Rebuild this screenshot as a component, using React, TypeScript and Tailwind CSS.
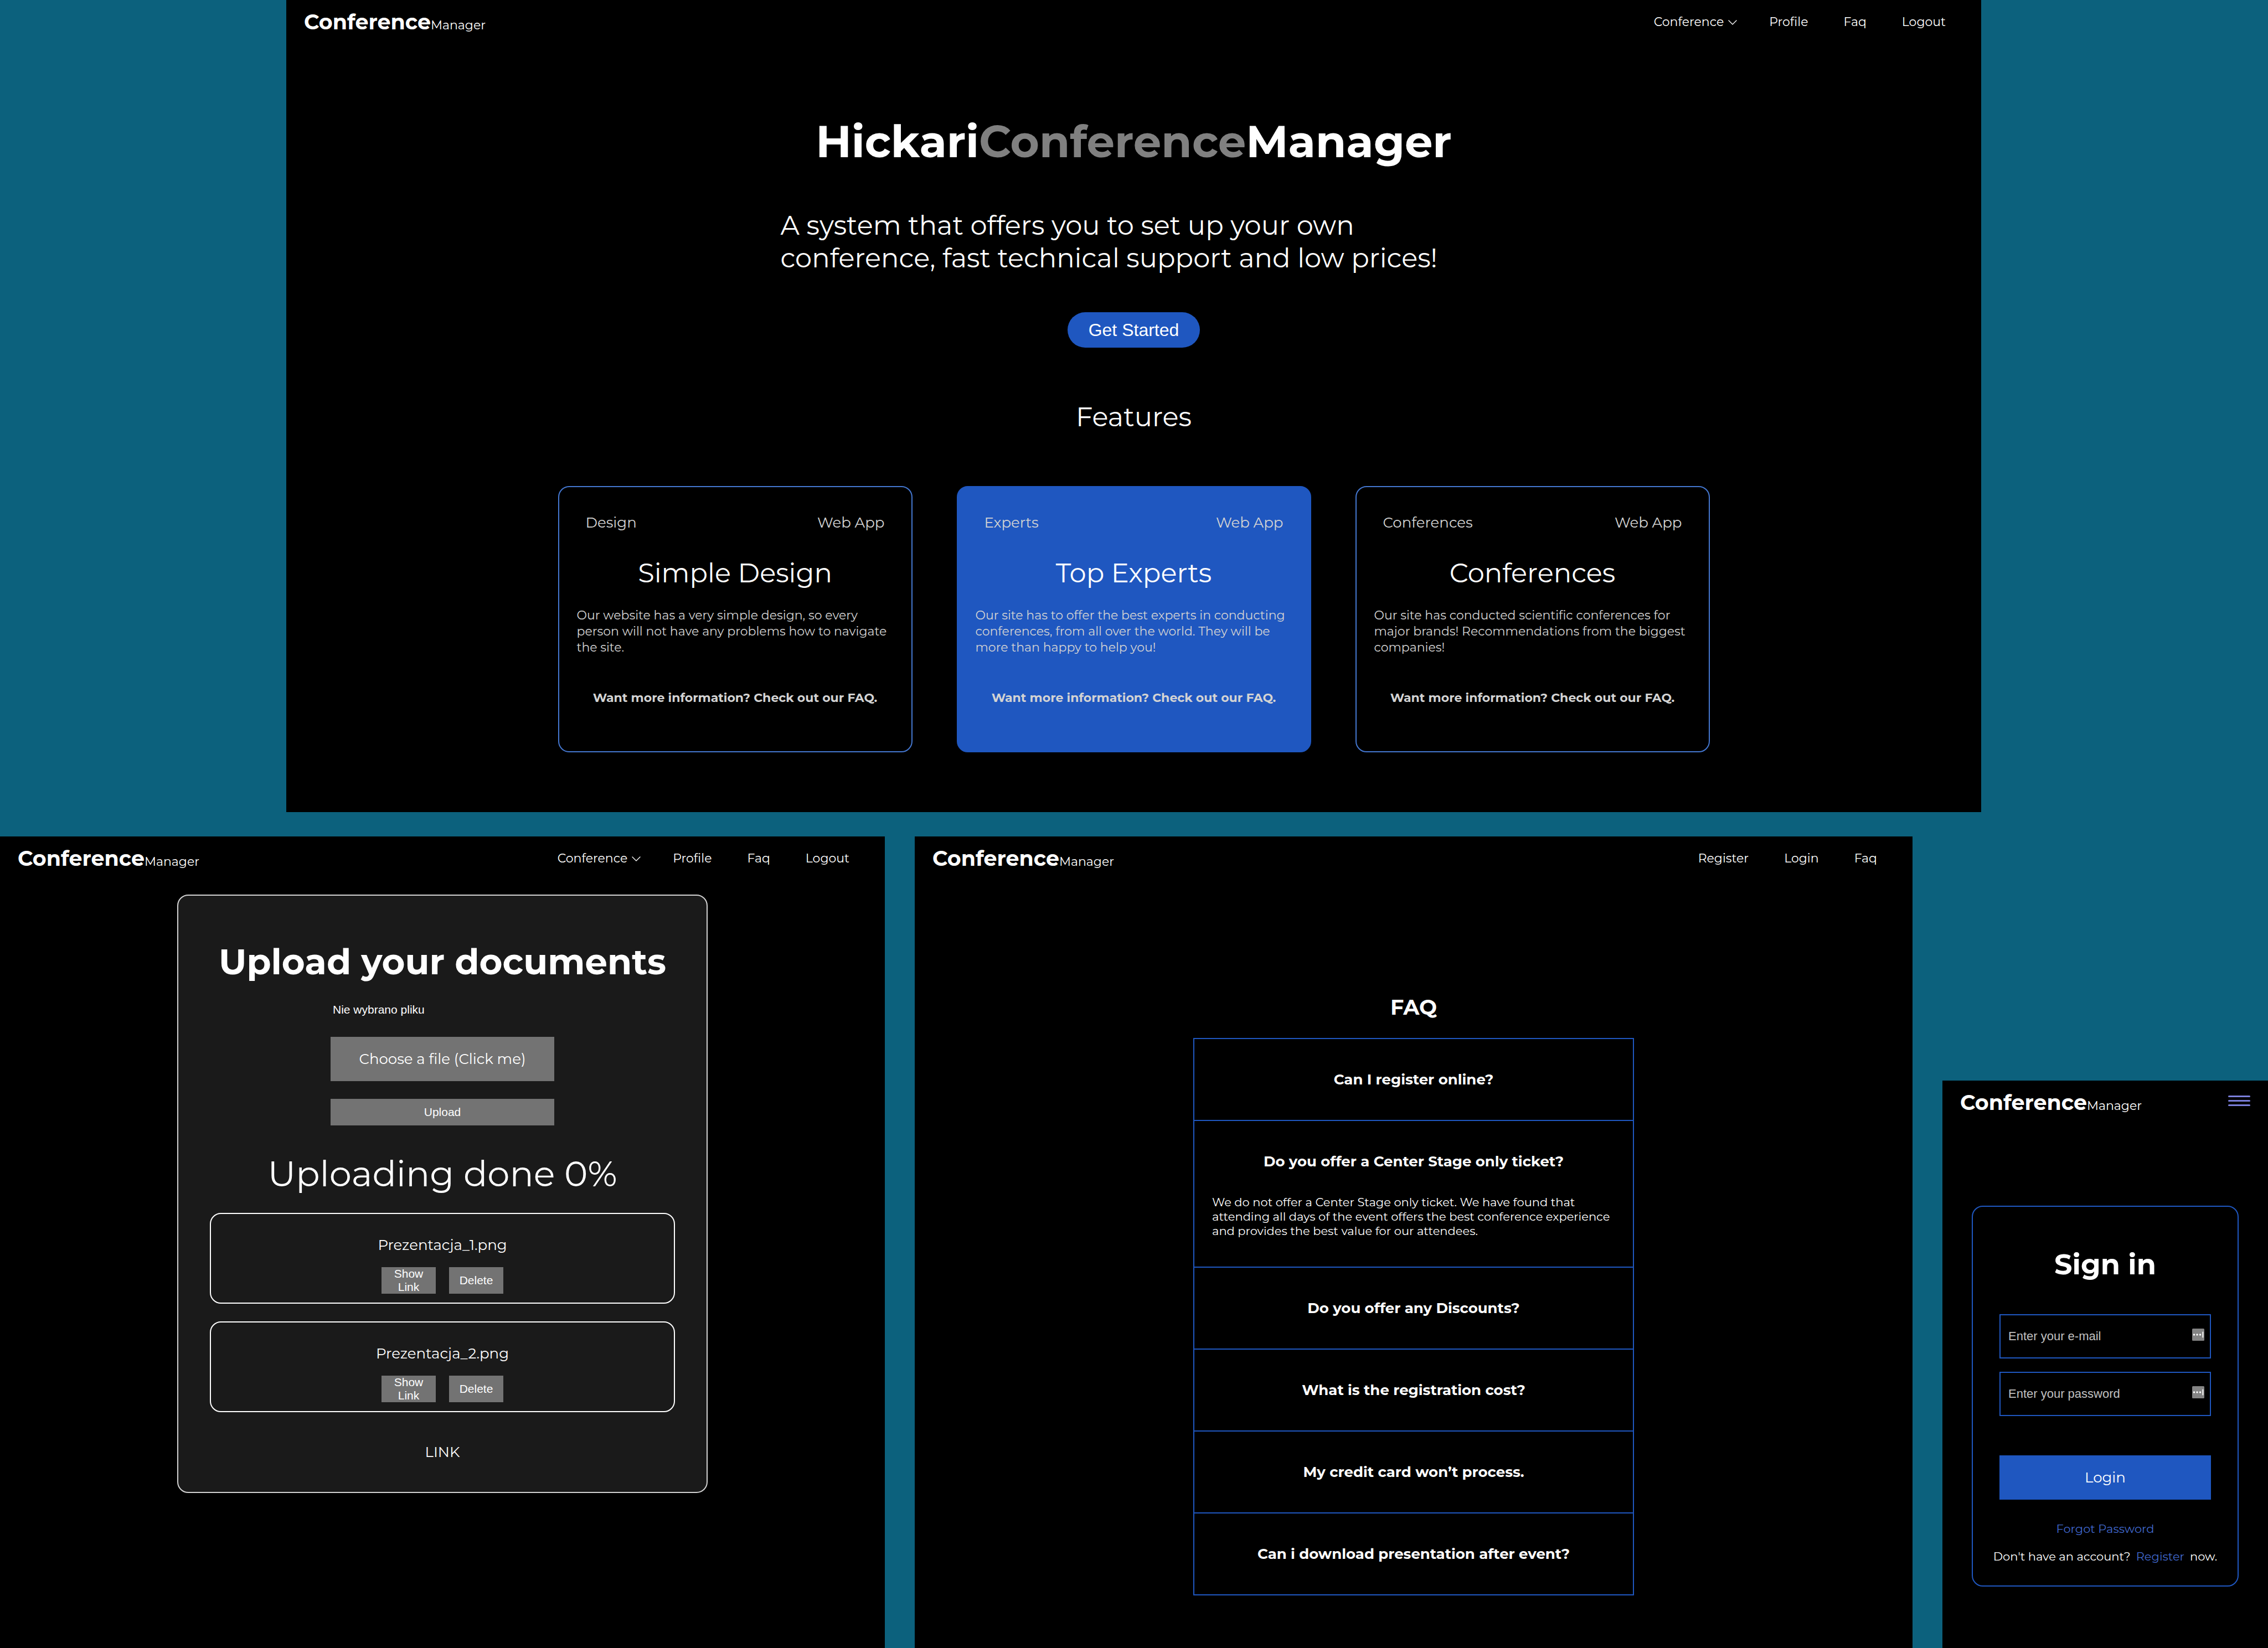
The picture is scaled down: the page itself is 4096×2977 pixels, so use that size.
import type { ReactNode } from "react";

type Feature = {
  tag: string;
  title: string;
  text: string;
  filled?: boolean;
};

const features: Feature[] = [
  {
    tag: "Design",
    title: "Simple Design",
    text: "Our website has a very simple design, so every person will not have any problems how to navigate the site.",
  },
  {
    tag: "Experts",
    title: "Top Experts",
    text: "Our site has to offer the best experts in conducting conferences, from all over the world. They will be more than happy to help you!",
    filled: true,
  },
  {
    tag: "Conferences",
    title: "Conferences",
    text: "Our site has conducted scientific conferences for major brands! Recommendations from the biggest companies!",
  },
];

const questions: { q: string; a?: string }[] = [
  { q: "Can I register online?" },
  {
    q: "Do you offer a Center Stage only ticket?",
    a: "We do not offer a Center Stage only ticket. We have found that attending all days of the event offers the best conference experience and provides the best value for our attendees.",
  },
  { q: "Do you offer any Discounts?" },
  { q: "What is the registration cost?" },
  { q: "My credit card won’t process." },
  { q: "Can i download presentation after event?" },
];

const files = ["Prezentacja_1.png", "Prezentacja_2.png"];

function Header({ children }: { children: ReactNode }) {
  return (
    <header className="flex h-20 items-center justify-between px-8">
      <a href="#" className="flex items-baseline whitespace-nowrap">
        <span className="text-[38px] leading-[46px] font-bold">Conference</span>
        <span className="text-[22px]">Manager</span>
      </a>
      {children}
    </header>
  );
}

function Nav({ items }: { items: string[] }) {
  return (
    <nav className="flex gap-16 pr-8 text-[22px] leading-[28px]">
      {items.map((item) => (
        <a key={item} href="#">
          {item}
        </a>
      ))}
    </nav>
  );
}

function MemberNav() {
  return (
    <div className="flex items-center gap-[58px] text-[22px] leading-[28px]">
      <button type="button" className="flex items-center gap-2">
        Conference
        <svg viewBox="0 0 16 9" className="h-[9px] w-4" fill="none" stroke="currentColor" strokeWidth="1.4" strokeLinecap="round" strokeLinejoin="round" aria-hidden="true">
          <path d="M1 1l7 7 7-7" />
        </svg>
      </button>
      <Nav items={["Profile", "Faq", "Logout"]} />
    </div>
  );
}

function FeatureCard({ tag, title, text, filled }: Feature) {
  return (
    <article
      className={`flex w-[640px] flex-col rounded-[20px] border-2 px-8 pt-12 pb-[82px] text-[#d3d3d3] ${
        filled ? "border-[#1f57c0] bg-[#1f57c0]" : "border-[#4477d0]"
      }`}
    >
      <div className="flex justify-between px-4 text-[26px] leading-[32px]">
        <span>{tag}</span>
        <span>Web App</span>
      </div>
      <h3 className="mt-[46px] text-center text-[48px] leading-[59px] text-white">{title}</h3>
      <p className="mt-8 text-[22px] leading-[29px]">{text}</p>
      <p className="mt-[62px] text-center text-[22px] leading-[29px] font-bold">
        Want more information? Check out our FAQ.
      </p>
    </article>
  );
}

function HomePanel() {
  return (
    <section className="bg-black pb-[108px]">
      <Header>
        <MemberNav />
      </Header>
      <h1 className="mt-[127px] text-center text-[80px] leading-[98px] font-bold">
        Hickari<span className="text-[#808080]">Conference</span>Manager
      </h1>
      <p className="mx-auto mt-[73px] w-[1276px] text-[48px] leading-[59px]">
        A system that offers you to set up your own
        <br />
        conference, fast technical support and low prices!
      </p>
      <div className="mt-[68px] flex justify-center">
        <button
          type="button"
          className="h-16 rounded-full bg-[#1f57c0] px-[38px] font-['Liberation_Sans',Arial,sans-serif] text-[32px] leading-[36px]"
        >
          Get Started
        </button>
      </div>
      <h2 className="mt-24 text-center text-[48px] leading-[59px]">Features</h2>
      <div className="mt-[95px] flex justify-center gap-20">
        {features.map((f) => (
          <FeatureCard key={f.tag} {...f} />
        ))}
      </div>
    </section>
  );
}

function SmallButton({ children }: { children: ReactNode }) {
  return (
    <button
      type="button"
      className="h-12 w-[98px] bg-[#737373] px-4 text-center font-['Liberation_Sans',Arial,sans-serif] text-[21px] leading-[24px]"
    >
      {children}
    </button>
  );
}

function UploadPanel() {
  return (
    <section className="bg-black">
      <Header>
        <MemberNav />
      </Header>
      <div className="mx-auto mt-[25px] flex w-[958px] flex-col items-center rounded-[20px] border-2 border-[#d3d3d3] bg-[#1a1a1a] pt-20 pb-14">
        <h1 className="text-[64px] leading-[78px] font-bold">Upload your documents</h1>
        <form className="mt-9 flex w-[404px] flex-col" onSubmit={(e) => e.preventDefault()}>
          <span className="px-1 font-['Liberation_Sans',Arial,sans-serif] text-[21px] leading-[24px]">
            Nie wybrano pliku
          </span>
          <input id="document" type="file" className="sr-only" />
          <label
            htmlFor="document"
            className="mt-[37px] flex h-20 items-center justify-center bg-[#737373] text-[26px] leading-[32px]"
          >
            Choose a file (Click me)
          </label>
          <button
            type="submit"
            className="mt-8 h-12 bg-[#737373] font-['Liberation_Sans',Arial,sans-serif] text-[21px] leading-[24px]"
          >
            Upload
          </button>
        </form>
        <p className="mt-12 text-[64px] leading-[78px]">Uploading done 0%</p>
        <ul className="mt-8 flex w-[840px] flex-col gap-8">
          {files.map((name) => (
            <li
              key={name}
              className="flex flex-col items-center rounded-[20px] border-2 border-white pt-10 pb-4 text-[26px] leading-[32px]"
            >
              <span>{name}</span>
              <div className="mt-6 flex gap-6">
                <SmallButton>Show Link</SmallButton>
                <SmallButton>Delete</SmallButton>
              </div>
            </li>
          ))}
        </ul>
        <a href="#" className="mt-14 text-[26px] leading-[32px]">
          LINK
        </a>
      </div>
    </section>
  );
}

function FaqPanel() {
  return (
    <section className="bg-black">
      <Header>
        <Nav items={["Register", "Login", "Faq"]} />
      </Header>
      <h1 className="mt-[206px] text-center text-[38px] leading-[46px] font-bold">FAQ</h1>
      <div className="mx-auto mt-8 w-[796px] border-b-2 border-[#1f57c0]">
        {questions.map(({ q, a }) => (
          <div key={q} className="border-2 border-b-0 border-[#1f57c0]">
            <button type="button" className="block w-full py-[57px] text-center text-[26px] leading-[32px] font-bold">
              {q}
            </button>
            {a && <p className="-mt-3 px-8 pb-[51px] text-[21px] leading-[26px]">{a}</p>}
          </div>
        ))}
      </div>
    </section>
  );
}

function Field({ id, type, label }: { id: string; type: string; label: string }) {
  return (
    <div className="relative">
      <input
        id={id}
        type={type}
        aria-label={label}
        placeholder={label}
        className="block h-20 w-full border-2 border-[#1f57c0] bg-black px-3.5 font-['Liberation_Sans',Arial,sans-serif] text-[22px] leading-[26px] placeholder:text-[#c0c0c0]"
      />
      <svg viewBox="0 0 22 22" className="absolute top-[26px] right-3 size-[22px]" aria-hidden="true">
        <rect width="22" height="22" rx="1.5" fill="#848484" />
        <circle cx="3.5" cy="11" r="1.7" fill="#fff" />
        <circle cx="9" cy="11" r="1.7" fill="#fff" />
        <circle cx="14.5" cy="11" r="1.7" fill="#fff" />
        <rect x="18" y="5.5" width="2.5" height="11" rx="1" fill="#dcdcdc" />
      </svg>
    </div>
  );
}

function SignInPanel() {
  return (
    <section className="mt-[441px] bg-black">
      <Header>
        <button type="button" aria-label="Menu" className="mt-[27px] flex flex-col gap-[5px] self-start">
          <span className="h-[3px] w-10 rounded-full bg-[#7b7fdb]" />
          <span className="h-[3px] w-10 rounded-full bg-[#7b7fdb]" />
          <span className="h-[3px] w-10 rounded-full bg-[#7b7fdb]" />
        </button>
      </Header>
      <form
        className="mx-auto mt-[146px] flex w-[482px] flex-col rounded-[20px] border-2 border-[#1f57c0] px-12 pt-[73px] pb-[39px]"
        onSubmit={(e) => e.preventDefault()}
      >
        <h1 className="text-center text-[51px] leading-[62px] font-bold">Sign in</h1>
        <div className="mt-[59px] flex flex-col gap-6">
          <Field id="email" type="email" label="Enter your e-mail" />
          <Field id="password" type="password" label="Enter your password" />
        </div>
        <button type="submit" className="mt-[71px] h-20 bg-[#1f57c0] text-[26px] leading-[32px]">
          Login
        </button>
        <a href="#" className="mt-10 text-center text-[21px] leading-[26px] text-[#4169cf]">
          Forgot Password
        </a>
        <p className="mt-6 flex justify-center gap-2.5 text-[21px] leading-[26px] whitespace-nowrap">
          <span>Don't have an account?</span>
          <a href="#" className="text-[#4169cf]">
            Register
          </a>
          <span>now.</span>
        </p>
      </form>
    </section>
  );
}

export default function App() {
  return (
    <main className="flex min-h-screen flex-col gap-11 bg-[#0c617d] font-[Montserrat,'Open_Sans',sans-serif] text-white">
      <div className="grid grid-cols-[517fr_3061fr_518fr]">
        <div className="col-start-2">
          <HomePanel />
        </div>
      </div>
      <div className="grid grow grid-cols-[1598fr_1802fr_588fr] gap-[54px]">
        <UploadPanel />
        <FaqPanel />
        <SignInPanel />
      </div>
    </main>
  );
}
